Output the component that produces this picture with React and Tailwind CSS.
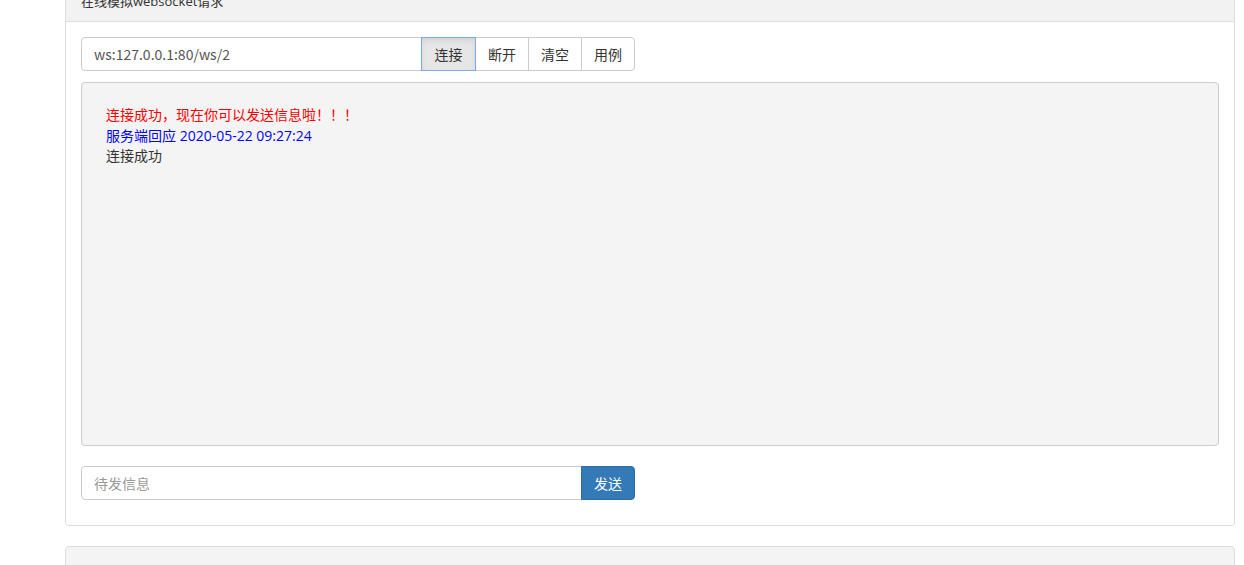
import { useState } from "react";

export default function App() {
  const [url, setUrl] = useState("ws:127.0.0.1:80/ws/2");
  const [msg, setMsg] = useState("");

  const font = { fontFamily: '"Open Sans", "Noto Sans CJK SC", sans-serif' };

  return (
    <div className="h-[565px] overflow-hidden bg-white text-[14px] text-[#333]" style={font}>
      <div className="ml-[65px] w-[1170px]">
        {/* panel */}
        <div className="-mt-[20px] rounded-[4px] border border-[#ddd] bg-white">
          <div className="h-[41px] border-b border-[#ddd] bg-[#f2f2f2] px-[15px] pt-[10px] text-[13px] leading-[20px]">
            在线模拟websocket请求
          </div>

          <div className="px-[15px] pt-[15px] pb-[25px]">
            {/* url row */}
            <div className="flex">
              <input
                value={url}
                onChange={(e) => setUrl(e.target.value)}
                className="h-[34px] w-[341px] rounded-l-[4px] border border-[#ccc] px-[12px] text-[14px] text-[#555] outline-none"
                style={{ fontFamily: '"Noto Sans CJK SC", sans-serif' }}
              />
              <button className="relative z-10 -ml-px h-[34px] w-[55px] border border-[#7fa9e6] bg-[#e6e6e6] text-[14px] text-[#333] shadow-[inset_0_3px_5px_rgba(0,0,0,0.08)]">
                连接
              </button>
              <button className="-ml-px h-[34px] w-[54px] border border-[#ccc] bg-white text-[14px] text-[#333]">
                断开
              </button>
              <button className="-ml-px h-[34px] w-[54px] border border-[#ccc] bg-white text-[14px] text-[#333]">
                清空
              </button>
              <button className="-ml-px h-[34px] w-[54px] rounded-r-[4px] border border-[#ccc] bg-white text-[14px] text-[#333]">
                用例
              </button>
            </div>

            {/* message box */}
            <div className="mt-[11px] h-[364px] w-[1138px] rounded-[4px] border border-[#ccc] bg-[#f4f4f4] pl-[24px] pt-[22px] text-[14px] leading-[20.5px]">
              <div className="text-[#ff0000]">连接成功，现在你可以发送信息啦！！！</div>
              <div className="text-[#0000ff]">服务端回应 2020-05-22 09:27:24</div>
              <div className="text-[#333]">连接成功</div>
            </div>

            {/* send row */}
            <div className="mt-[20px] flex">
              <input
                value={msg}
                onChange={(e) => setMsg(e.target.value)}
                placeholder="待发信息"
                className="h-[34px] w-[501px] rounded-l-[4px] border border-[#ccc] px-[12px] text-[14px] text-[#555] outline-none placeholder:text-[#999]"
              />
              <button className="-ml-px h-[34px] w-[54px] rounded-r-[4px] border border-[#2e6da4] bg-[#337ab7] text-[14px] text-white">
                发送
              </button>
            </div>
          </div>
        </div>

        {/* next panel */}
        <div className="mt-[20px] h-[40px] rounded-t-[4px] border border-[#ddd] bg-[#f4f4f4]" />
      </div>
    </div>
  );
}
